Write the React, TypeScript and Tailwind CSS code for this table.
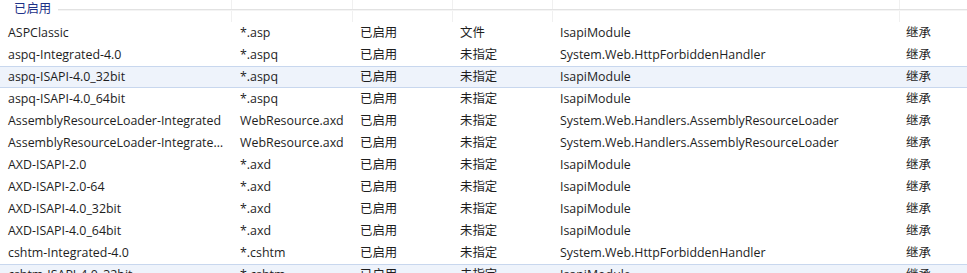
import React from "react";

const rows: [string, string, string, string, string, string, boolean?][] = [
  ["ASPClassic", "*.asp", "已启用", "文件", "IsapiModule", "继承"],
  ["aspq-Integrated-4.0", "*.aspq", "已启用", "未指定", "System.Web.HttpForbiddenHandler", "继承"],
  ["aspq-ISAPI-4.0_32bit", "*.aspq", "已启用", "未指定", "IsapiModule", "继承", true],
  ["aspq-ISAPI-4.0_64bit", "*.aspq", "已启用", "未指定", "IsapiModule", "继承"],
  ["AssemblyResourceLoader-Integrated", "WebResource.axd", "已启用", "未指定", "System.Web.Handlers.AssemblyResourceLoader", "继承"],
  ["AssemblyResourceLoader-Integrated-4.0", "WebResource.axd", "已启用", "未指定", "System.Web.Handlers.AssemblyResourceLoader", "继承"],
  ["AXD-ISAPI-2.0", "*.axd", "已启用", "未指定", "IsapiModule", "继承"],
  ["AXD-ISAPI-2.0-64", "*.axd", "已启用", "未指定", "IsapiModule", "继承"],
  ["AXD-ISAPI-4.0_32bit", "*.axd", "已启用", "未指定", "IsapiModule", "继承"],
  ["AXD-ISAPI-4.0_64bit", "*.axd", "已启用", "未指定", "IsapiModule", "继承"],
  ["cshtm-Integrated-4.0", "*.cshtm", "已启用", "未指定", "System.Web.HttpForbiddenHandler", "继承"],
  ["cshtm-ISAPI-4.0_32bit", "*.cshtm", "已启用", "未指定", "IsapiModule", "继承", true],
];

const cols = "grid grid-cols-[232px_121px_100px_100px_347px_67px]";

export default function App() {
  return (
    <div
      className="w-[967px] h-[273px] overflow-hidden bg-white text-[12.4px] text-[#1e1e1e]"
      style={{ fontFamily: '"Open Sans", "Noto Sans CJK SC", sans-serif' }}
    >
      <div className={`${cols} h-[22px] relative`}>
        <div className="border-r border-[#f0f0f0]" />
        <div className="border-r border-[#f0f0f0]" />
        <div className="border-r border-[#f0f0f0]" />
        <div className="border-r border-[#f0f0f0]" />
        <div className="border-r border-[#f0f0f0]" />
        <div />
        <div className="absolute inset-0 flex items-start">
          <span className="pl-[14px] pr-[7px] bg-white text-[#1e3287] leading-[20px] mt-[-1px]">已启用</span>
          <div className="flex-1 mt-[9px] h-[2px] border-t border-b border-t-[#e2e2e2] border-b-[#f4f4f4]" />
        </div>
      </div>
      {rows.map((r, i) => (
        <div
          key={i}
          className={`${cols} h-[22px] items-center border-y ${
            r[6] ? "bg-[#eef3fb] border-[#c8d7ee]" : "border-transparent"
          }`}
        >
          <div className="pl-[8px] pr-[6px] truncate">{r[0]}</div>
          <div className="pl-[8px] truncate">{r[1]}</div>
          <div className="pl-[7px] truncate">{r[2]}</div>
          <div className="pl-[7px] truncate">{r[3]}</div>
          <div className="pl-[7px] truncate">{r[4]}</div>
          <div className="pl-[6px] truncate">{r[5]}</div>
        </div>
      ))}
    </div>
  );
}
